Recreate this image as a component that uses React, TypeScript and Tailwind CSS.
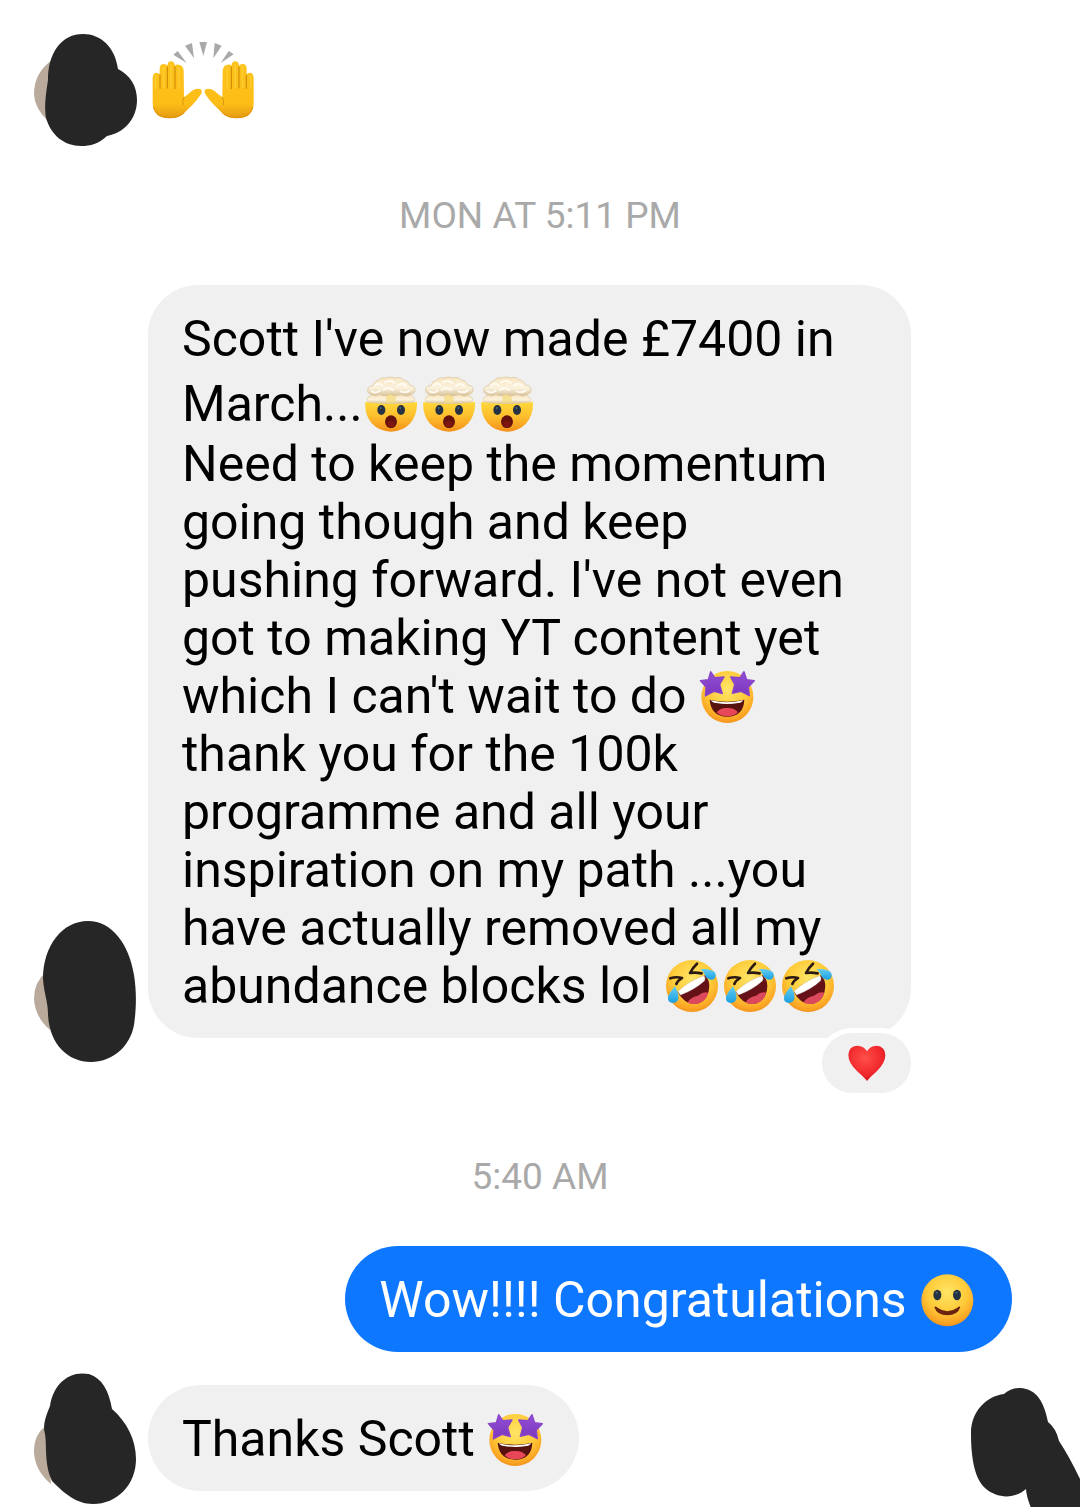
import React from 'react';

const Gradients: React.FC = () => (
  <svg width="0" height="0" className="absolute" aria-hidden="true">
    <defs>
      <radialGradient id="face" cx="0.5" cy="0.35" r="0.68">
        <stop offset="0" stopColor="#ffe566" />
        <stop offset="0.55" stopColor="#fecb3a" />
        <stop offset="0.85" stopColor="#fba524" />
        <stop offset="1" stopColor="#f08c1a" />
      </radialGradient>
      <linearGradient id="jaw" x1="0" y1="0" x2="0" y2="1">
        <stop offset="0" stopColor="#ffd93b" />
        <stop offset="0.5" stopColor="#fdbd2c" />
        <stop offset="1" stopColor="#f3901a" />
      </linearGradient>
      <linearGradient id="hand" x1="0" y1="0" x2="0" y2="1">
        <stop offset="0" stopColor="#fdc31d" />
        <stop offset="0.75" stopColor="#fdbd17" />
        <stop offset="1" stopColor="#e39a12" />
      </linearGradient>
      <linearGradient id="cloud" x1="0" y1="0" x2="0" y2="1">
        <stop offset="0" stopColor="#f8e6c2" />
        <stop offset="0.6" stopColor="#fbf1dc" />
        <stop offset="1" stopColor="#d9c29a" />
      </linearGradient>
      <linearGradient id="star" x1="0" y1="0" x2="0" y2="1">
        <stop offset="0" stopColor="#9350d6" />
        <stop offset="1" stopColor="#7a37bd" />
      </linearGradient>
      <linearGradient id="tear" x1="0" y1="0" x2="0" y2="1">
        <stop offset="0" stopColor="#63cdf5" />
        <stop offset="1" stopColor="#1b9fe0" />
      </linearGradient>
      <radialGradient id="heart" cx="0.45" cy="0.35" r="0.7">
        <stop offset="0" stopColor="#ff5048" />
        <stop offset="0.7" stopColor="#f0252b" />
        <stop offset="1" stopColor="#b91219" />
      </radialGradient>
    </defs>
  </svg>
);

const RaisedHands: React.FC = () => {
  const hand = (
    <g>
      <path
        d="M397 176 Q397 158 408 158 Q415 158 418 163 L418 145 Q419 132 430 132 Q438 132 441 137 Q442 124 452 124 Q462 124 464 137 Q468 133 475 134 Q488 135 490 152 L491 232 Q505 222 514 213 Q530 202 541 208 Q548 214 541 224 Q530 240 516 255 Q500 270 492 279 Q478 295 447 295 Q398 295 397 250 Z"
        fill="url(#hand)"
      />
      <path d="M419 165 V205 M441 141 V204 M464 141 V206" stroke="#c98505" strokeWidth="3" strokeLinecap="round" fill="none" />
      <path d="M406 166 V204 M430 139 V202 M452 131 V202 M476 141 V205" stroke="#ffdc4b" strokeWidth="4" strokeLinecap="round" opacity="0.5" fill="none" />
      <path d="M491 232 Q484 244 488 254" stroke="#d99410" strokeWidth="3" strokeLinecap="round" fill="none" />
      <path d="M400 262 Q410 293 447 293 Q476 293 491 278" stroke="#df920d" strokeWidth="3" fill="none" />
    </g>
  );
  return (
    <svg viewBox="395 60 309 240" className="w-[103px] h-[80px] shrink-0" role="img" aria-label="raising hands">
      {hand}
      <g transform="translate(1097 0) scale(-1 1)">{hand}</g>
      <g fill="#a8a9ab">
        <path d="M459 104 L472 93 L499 129 Z" />
        <path d="M494 77 L515 69 L521 115 Z" />
        <path d="M537 66 H560 L549 108 Z" />
        <path d="M583 69 L604 77 L579 115 Z" />
        <path d="M625 93 L640 103 L601 129 Z" />
      </g>
    </svg>
  );
};

const MindBlown: React.FC = () => (
  <svg viewBox="30 30 159 171" className="w-[53px] h-[57px] shrink-0" role="img" aria-label="mind blown">
    <path d="M31 108 Q108 116 186 108 Q188 145 166 172 Q143 197 108 197 Q73 197 50 172 Q28 145 31 108 Z" fill="url(#jaw)" />
    <path
      d="M40 108 Q32 96 44 91 Q51 83 62 91 Q70 83 83 88 H134 Q146 83 154 91 Q166 84 173 92 Q184 99 175 108 Q150 113 108 112 Q64 113 40 108 Z"
      fill="url(#cloud)"
      stroke="#ddc7a0"
      strokeWidth="2"
    />
    <path d="M94 84 H122 V110 H94 Z" fill="#f5dc83" opacity="0.8" />
    <path
      d="M53 87 Q35 83 38 70 Q40 59 54 59 Q56 46 70 43 Q78 32 92 36 Q106 30 120 36 Q136 31 145 42 Q159 43 164 57 Q179 59 180 70 Q182 83 163 87 Q148 92 137 84 Q120 94 106 84 Q87 94 75 84 Q66 91 53 87 Z"
      fill="url(#cloud)"
      stroke="#d8c198"
      strokeWidth="2"
    />
    <path d="M61 58 Q72 48 82 58 M90 49 Q106 40 119 51 M128 59 Q143 48 153 60 M86 72 Q101 61 114 72 M50 76 Q62 84 74 74 M137 76 Q153 83 165 73" stroke="#fffaf0" strokeWidth="6" strokeLinecap="round" fill="none" />
    <g fill="#263243">
      <ellipse cx="79" cy="132" rx="12" ry="15" />
      <ellipse cx="138" cy="132" rx="12" ry="15" />
    </g>
    <g fill="#52637a">
      <circle cx="77" cy="126" r="3" />
      <circle cx="136" cy="126" r="3" />
    </g>
    <ellipse cx="108" cy="167" rx="18" ry="19" fill="#63110c" />
    <ellipse cx="108" cy="174" rx="12" ry="10" fill="#7c160f" />
  </svg>
);

const StarStruck: React.FC = () => (
  <svg viewBox="24 26 168 165" className="-mx-[2px] w-[56px] h-[55px] shrink-0" role="img" aria-label="star struck">
    <circle cx="109" cy="110" r="78" fill="url(#face)" />
    <path d="M56 118 Q109 130 160 118 Q158 168 109 169 Q60 168 56 118 Z" fill="#57120f" />
    <path d="M77 156 Q88 142 108 143 Q130 142 141 156 Q130 168 109 168 Q88 168 77 156 Z" fill="#e8475a" />
    <path d="M60 120 Q109 132 156 120 Q154 127 142 128 Q109 134 76 128 Q62 127 60 120 Z" fill="#fff" />
    <g fill="url(#star)" stroke="#8945c9" strokeWidth="4" strokeLinejoin="round">
      <path d="M59 34 L71 52 L99 50 L86 72 L94 100 L69 93 L43 107 L45 80 L28 61 L52 58 Z" />
      <path d="M159 34 L147 52 L119 50 L131 72 L124 99 L150 93 L175 106 L172 80 L190 61 L167 58 Z" />
    </g>
  </svg>
);

const Rofl: React.FC = () => (
  <svg viewBox="33 28 159 162" className="w-[53px] h-[54px] shrink-0" role="img" aria-label="rolling on the floor laughing">
    <circle cx="111" cy="109" r="78" fill="url(#face)" />
    <path d="M68 126 Q112 108 149 77 Q162 87 163 109 Q162 148 131 161 Q91 170 68 126 Z" fill="#651117" />
    <path d="M97 159 Q106 142 129 138 Q146 124 160 129 Q153 156 128 162 Q111 165 97 159 Z" fill="#dc485c" />
    <path d="M69 125 Q104 92 147 78 Q153 85 149 93 Q122 118 77 136 Q71 132 69 125 Z" fill="#fff" stroke="#a9a5aa" strokeWidth="1" />
    <g stroke="#2b1a12" strokeWidth="8" strokeLinecap="round" strokeLinejoin="round" fill="none">
      <path d="M46 86 Q64 80 81 85 Q67 94 64 103" />
      <path d="M126 42 Q112 55 105 70 Q120 67 140 71" />
    </g>
    <path d="M136 59 Q151 57 165 60 Q184 64 182 79 Q180 91 167 90 Q153 89 149 74 Q145 64 136 59 Z" fill="url(#tear)" />
    <path d="M60 110 Q73 134 70 147 Q66 160 52 160 Q37 158 39 142 Q43 129 60 110 Z" fill="url(#tear)" />
  </svg>
);

const Smile: React.FC = () => (
  <svg viewBox="36 42 159 159" className="w-[53px] h-[53px] shrink-0" role="img" aria-label="slightly smiling face">
    <circle cx="115" cy="121" r="78" fill="url(#face)" />
    <g fill="#263243">
      <ellipse cx="85" cy="105" rx="12" ry="16" />
      <ellipse cx="144" cy="105" rx="12" ry="16" />
    </g>
    <g fill="#52637a">
      <circle cx="83" cy="98" r="3" />
      <circle cx="142" cy="98" r="3" />
    </g>
    <path d="M76 142 Q78 137 86 143 Q115 164 145 143 Q152 137 154 142 Q146 166 115 166 Q84 166 76 142 Z" fill="#6b2410" />
  </svg>
);

const Heart: React.FC = () => (
  <svg viewBox="144 194 114 108" className="w-[38px] h-[36px]" role="img" aria-label="love">
    <path d="M201 302 Q195 293 173 274 Q145 249 145 224 Q146 197 172 196 Q192 197 201 213 Q210 197 230 196 Q255 198 256 224 Q256 249 229 274 Q208 292 201 302 Z" fill="url(#heart)" />
  </svg>
);

interface TextLine {
  text: string;
  emoji?: React.FC;
  count?: number;
  tall?: boolean;
}

const longMessage: TextLine[] = [
  { text: "Scott I've now made £7400 in" },
  { text: 'March...', emoji: MindBlown, count: 3, tall: true },
  { text: 'Need to keep the momentum' },
  { text: 'going though and keep' },
  { text: "pushing forward. I've not even" },
  { text: 'got to making YT content yet' },
  { text: "which I can't wait to do ", emoji: StarStruck, count: 1 },
  { text: 'thank you for the 100k' },
  { text: 'programme and all your' },
  { text: 'inspiration on my path ...you' },
  { text: 'have actually removed all my' },
  { text: 'abundance blocks lol ', emoji: Rofl, count: 3 },
];

const Line: React.FC<{ line: TextLine }> = ({ line }) => {
  const Emoji = line.emoji;
  return (
    <div className={`flex items-center whitespace-pre ${line.tall ? 'pt-[7px] pb-[2px]' : ''}`}>
      <span>{line.text}</span>
      {Emoji && (
        <span className="flex h-[58px] items-center gap-[5px] pl-[2px] pr-[4px]">
          {Array.from({ length: line.count || 1 }, (_, i) => (
            <Emoji key={i} />
          ))}
        </span>
      )}
    </div>
  );
};

const Timestamp: React.FC<{ children: React.ReactNode; className: string }> = ({ children, className }) => (
  <time className={`block text-center text-[37px] leading-[44px] text-[#a9a9a9] ${className}`}>{children}</time>
);

const bubble = 'px-[34px] pt-[25px] pb-[23px] text-[50px] leading-[58px]';

export default function App() {
  return (
    <main className="bg-white text-black overflow-x-hidden pt-[34px] font-[Roboto,'Noto_Sans',sans-serif]">
      <Gradients />

      <section className="flex items-start gap-[15px] pl-[34px]">
        <svg viewBox="34 34 103 113" className="w-[103px] h-[113px] shrink-0" aria-hidden="true">
          <path d="M52 60 Q34 73 34 94 Q35 111 52 124 Z" fill="#b9aa9b" />
          <path d="M83 34 C101 34 115 47 118 69 C130 75 137 86 137 100 C137 119 124 133 107 136 C98 144 91 146 81 146 C64 146 51 135 46 118 C44 105 46 94 48 80 C48 52 62 34 83 34 Z" fill="#262626" />
        </svg>
        <div className="pt-[6px]">
          <RaisedHands />
        </div>
      </section>

      <Timestamp className="mt-[47px] mb-[47px]">MON AT 5:11 PM</Timestamp>

      <section className="flex items-end gap-[12px] pl-[34px]">
        <svg viewBox="34 921 102 142" className="w-[102px] h-[142px] shrink-0" aria-hidden="true">
          <path d="M46 972 Q34 982 34 999 Q35 1017 50 1030 Z" fill="#b9aa9b" />
          <path d="M88 921 C112 921 129 944 134 975 C137 994 136 1011 134 1025 C130 1047 112 1062 91 1062 C68 1062 49 1044 48 1014 C48 1001 44 994 43 979 C43 946 62 921 88 921 Z" fill="#262626" />
        </svg>
        <div className={`relative mb-[25px] w-full max-w-[763px] rounded-[50px] bg-[#f0f0f0] ${bubble}`}>
          {longMessage.map((line) => (
            <Line key={line.text} line={line} />
          ))}
          <button
            type="button"
            aria-label="Reactions"
            className="absolute right-0 -bottom-[55px] flex h-[60px] w-[89px] items-center justify-center rounded-full bg-[#f0f0f0] ring-[5px] ring-white"
          >
            <Heart />
          </button>
        </div>
      </section>

      <Timestamp className="mt-[92px] mb-[47px]">5:40 AM</Timestamp>

      <section className="flex justify-end pr-[68px]">
        <div className={`rounded-[53px] bg-[#0d78ff] text-white ${bubble}`}>
          <Line line={{ text: 'Wow!!!! Congratulations ', emoji: Smile }} />
        </div>
      </section>

      <section className="mt-[21px] flex items-start pl-[34px]">
        <svg viewBox="34 1373 102 132" className="w-[102px] h-[132px] shrink-0" aria-hidden="true">
          <path d="M46 1426 Q34 1434 34 1452 Q35 1471 51 1484 Z" fill="#b9aa9b" />
          <path d="M76 1374 Q82 1373 89 1374 C102 1378 109 1391 112 1409 C127 1422 136 1440 136 1459 C136 1485 117 1504 93 1504 C76 1504 64 1493 52 1481 C44 1464 47 1446 45 1434 C42 1424 47 1414 50 1406 C53 1387 64 1377 76 1374 Z" fill="#262626" />
        </svg>
        <div className={`mt-[12px] ml-[12px] rounded-[53px] bg-[#f0f0f0] ${bubble}`}>
          <Line line={{ text: 'Thanks Scott ', emoji: StarStruck }} />
        </div>
        <svg viewBox="970 1388 110 120" className="mt-[15px] ml-auto w-[110px] h-[120px] shrink-0" aria-hidden="true">
          <path d="M1020 1388 C1037 1389 1044 1402 1048 1422 Q1056 1428 1059 1441 Q1069 1456 1080 1479 V1508 H1031 Q1026 1495 1026 1489 C1015 1499 997 1499 985 1488 C973 1477 971 1452 971 1433 C971 1412 986 1396 1004 1394 Q1011 1388 1020 1388 Z" fill="#262626" />
        </svg>
      </section>
    </main>
  );
}
